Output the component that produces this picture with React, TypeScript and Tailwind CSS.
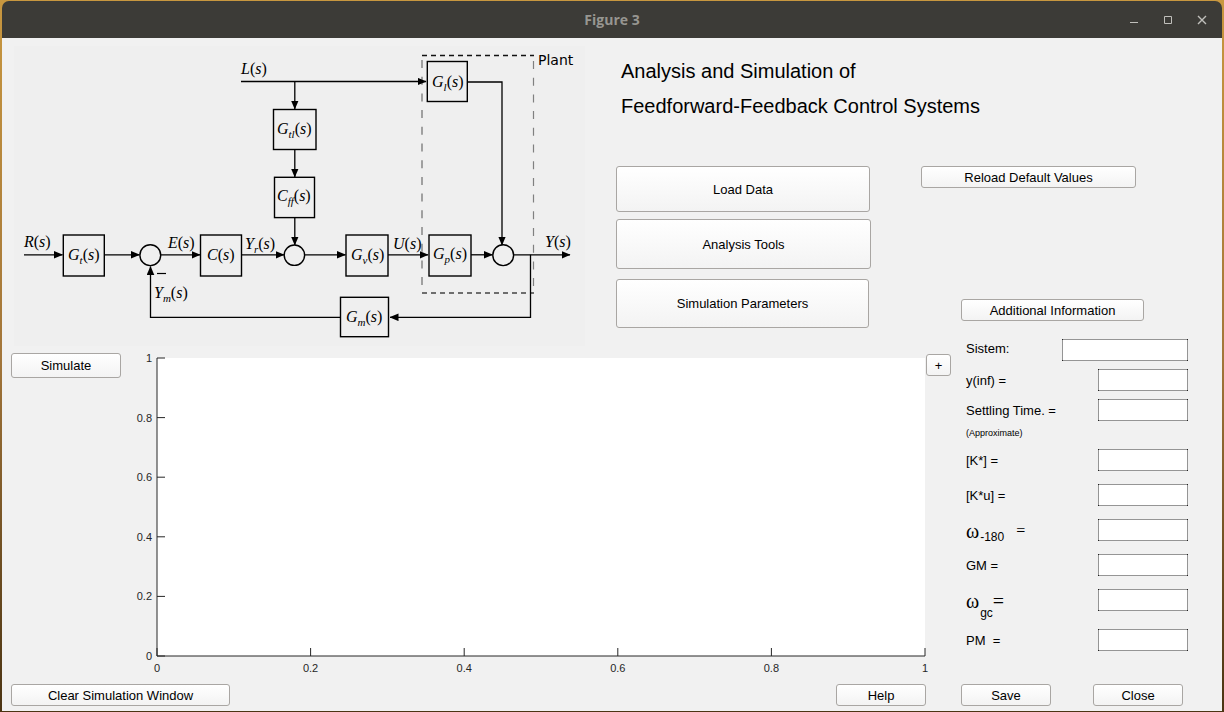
import type { ReactNode } from "react";

const buttonLook =
  "rounded-[3px] border border-[#a9a6a3] bg-linear-to-b from-white to-[#f3f3f3] pt-px text-[13px] leading-4 text-black hover:from-[#fafafa] hover:to-[#ececec]";

function PushButton({ className, children }: { className: string; children: ReactNode }) {
  return (
    <button type="button" className={`${buttonLook} ${className}`}>
      {children}
    </button>
  );
}

const fieldLook =
  "h-[22px] shrink-0 bg-[#959595] bg-[linear-gradient(#222,#222),linear-gradient(#222,#222),linear-gradient(#222,#222),linear-gradient(#222,#222),linear-gradient(#fff,#fff)] bg-no-repeat [background-position:0_0,100%_0,0_100%,100%_100%,center] [background-size:1px_1px,1px_1px,1px_1px,1px_1px,calc(100%_-_2px)_calc(100%_-_2px)] px-1 text-[13px] outline-none";

function Field({
  id,
  label,
  row = "h-[35px]",
  width = "w-[90px]",
}: {
  id: string;
  label: ReactNode;
  row?: string;
  width?: string;
}) {
  return (
    <div className={`flex items-start justify-between ${row}`}>
      <label htmlFor={id} className="whitespace-pre text-[13px] leading-6">
        {label}
      </label>
      <input id={id} type="text" className={`${fieldLook} ${width}`} />
    </div>
  );
}

function Term({ x, y, name, sub }: { x: number; y: number; name: string; sub?: string }) {
  return (
    <text x={x} y={y} fontSize="16">
      <tspan fontStyle="italic">{name}</tspan>
      {sub && (
        <tspan fontStyle="italic" fontSize="11" dy="4">
          {sub}
        </tspan>
      )}
      <tspan dy={sub ? -4 : 0}>(</tspan>
      <tspan fontStyle="italic">s</tspan>
      <tspan>)</tspan>
    </text>
  );
}

function Arrow({ d }: { d: string }) {
  return <path d={d} fill="none" stroke="#000" strokeWidth="1.3" markerEnd="url(#head)" />;
}

function BlockDiagram() {
  return (
    <svg
      viewBox="14 46 571 300"
      className="h-[300px] w-[571px] shrink-0 bg-[#efefef] font-['Liberation_Serif',serif]"
      role="img"
      aria-label="Feedforward-feedback block diagram"
    >
      <defs>
        <marker
          id="head"
          markerWidth="9"
          markerHeight="8"
          refX="8.5"
          refY="4"
          orient="auto"
          markerUnits="userSpaceOnUse"
        >
          <path d="M0 0.2 L9 4 L0 7.8 Z" />
        </marker>
      </defs>

      <path d="M422 55.5H534" stroke="#111" strokeWidth="1.3" strokeDasharray="5 4" />
      <path d="M422 293H534" stroke="#444" strokeWidth="1.5" strokeDasharray="5 4" />
      <path d="M422 60V293" stroke="#a0a0a0" strokeWidth="2" strokeDasharray="8 8.7" />
      <path d="M533.5 61V293" stroke="#808080" strokeWidth="1.2" strokeDasharray="8 8.7" />

      <Arrow d="M241 81.5H426" />
      <Arrow d="M294.8 81.5V109" />
      <Arrow d="M294.8 149V177" />
      <Arrow d="M294.8 218V245" />
      <Arrow d="M467 82H502V245" />
      <Arrow d="M24 254.8H62.5" />
      <Arrow d="M104 254.8H139.5" />
      <Arrow d="M161 254.8H200" />
      <Arrow d="M241 254.8H284" />
      <Arrow d="M305 254.8H345.5" />
      <Arrow d="M388 254.8H428" />
      <Arrow d="M471 254.8H492.5" />
      <Arrow d="M514 254.8H570" />
      <Arrow d="M530.5 254.8V317.3H390" />
      <Arrow d="M340 317.3H150.5V266.5" />

      <g fill="#efefef" stroke="#000" strokeWidth="1.4">
        <rect x="427.3" y="61.5" width="40" height="40" />
        <rect x="273.5" y="109.5" width="42.5" height="40" />
        <rect x="274.5" y="177.3" width="40" height="40.3" />
        <rect x="63.3" y="235" width="41" height="41" />
        <rect x="200.5" y="235" width="41" height="41" />
        <rect x="346" y="235" width="42" height="41" />
        <rect x="429" y="235" width="42" height="41" />
        <rect x="340.5" y="297.3" width="48" height="39.4" />
        <circle cx="150.3" cy="255.2" r="10.4" />
        <circle cx="294.4" cy="255.2" r="10.2" />
        <circle cx="503.2" cy="255.2" r="10.4" />
      </g>
      <path d="M157 273.5H166" stroke="#000" strokeWidth="1.2" />

      <Term x={241} y={74} name="L" />
      <Term x={432} y={87} name="G" sub="l" />
      <Term x={277} y={134} name="G" sub="tl" />
      <Term x={277} y={201} name="C" sub="ff" />
      <Term x={24} y={247} name="R" />
      <Term x={68} y={260} name="G" sub="t" />
      <Term x={168} y={248} name="E" />
      <Term x={207} y={260} name="C" />
      <Term x={245} y={249} name="Y" sub="r" />
      <Term x={351} y={260} name="G" sub="v" />
      <Term x={393} y={249} name="U" />
      <Term x={433} y={259} name="G" sub="p" />
      <Term x={545} y={247} name="Y" />
      <Term x={154} y={298} name="Y" sub="m" />
      <Term x={346} y={322} name="G" sub="m" />
      <text x="538" y="65" fontSize="14" className="font-['DejaVu_Sans',sans-serif]">
        Plant
      </text>
    </svg>
  );
}

const ticks = [0, 0.2, 0.4, 0.6, 0.8, 1];

function ResponsePlot() {
  return (
    <svg
      viewBox="0 0 805 323"
      className="min-w-0 flex-1 overflow-visible"
      fontSize="11"
      fill="#262626"
      role="img"
      aria-label="Simulation plot"
    >
      <rect x="36" y="5" width="768" height="298" fill="#fff" />
      <path d="M36 5V303H804" fill="none" stroke="#262626" />
      {ticks.map((t) => (
        <g key={t}>
          <path
            d={`M36 ${303 - t * 298}h8M${36 + t * 768} 303v-8`}
            fill="none"
            stroke="#262626"
          />
          <text x="31" y={307 - t * 298} textAnchor="end">
            {t}
          </text>
          <text x={36 + t * 768} y="319" textAnchor="middle">
            {t}
          </text>
        </g>
      ))}
    </svg>
  );
}

function TitleBar() {
  return (
    <header className="grid h-[37px] grid-cols-[1fr_auto_1fr] items-center rounded-t-[7px] bg-[#3c3b37] text-[#979691]">
      <h1 className="col-start-2 font-['Open_Sans',sans-serif] text-[14px] font-bold">Figure 3</h1>
      <div className="flex justify-end gap-[18px] pr-3">
        <button type="button" aria-label="Minimize" className="size-4">
          <svg viewBox="0 0 16 16" fill="none" stroke="#c0bfbb">
            <path d="M4 10.5h8" />
          </svg>
        </button>
        <button type="button" aria-label="Maximize" className="size-4">
          <svg viewBox="0 0 16 16" fill="none" stroke="#c0bfbb">
            <path d="M4.5 4.5h7v7h-7z" />
          </svg>
        </button>
        <button type="button" aria-label="Close window" className="size-4">
          <svg viewBox="0 0 16 16" fill="none" stroke="#c0bfbb" strokeWidth="1.4">
            <path d="M4 4l8 8M12 4l-8 8" />
          </svg>
        </button>
      </div>
    </header>
  );
}

export default function App() {
  return (
    <div className="flex min-h-screen flex-col bg-linear-to-b from-[#c8973f] via-[#a3763a] to-[#4b3413] px-[2px] pt-px pb-px font-['Liberation_Sans',sans-serif] text-black">
      <TitleBar />
      <main className="flex flex-1 flex-col bg-[#f1f1f1] pb-[5px]">
        <div className="flex">
          <section className="min-w-0 flex-1">
            <div className="flex pt-2 pl-3">
              <BlockDiagram />
              <div className="flex min-w-0 flex-1 flex-col items-start pt-2 pl-[31px]">
                <h2 className="pl-[5px] text-[20px] leading-[35px] whitespace-nowrap">
                  Analysis and Simulation of
                  <br />
                  Feedforward-Feedback Control Systems
                </h2>
                <PushButton className="mt-[42px] h-[46px] w-[254px]">Load Data</PushButton>
                <PushButton className="mt-[7px] h-[50px] w-[255px]">Analysis Tools</PushButton>
                <PushButton className="mt-[10px] h-[49px] w-[253px]">Simulation Parameters</PushButton>
              </div>
            </div>
            <div className="flex items-start pt-[7px] pr-[10px] pl-[9px]">
              <PushButton className="h-[25px] w-[110px]">Simulate</PushButton>
              <ResponsePlot />
              <PushButton className="mt-px h-[22px] w-[25px]">+</PushButton>
            </div>
          </section>

          <aside className="flex w-[261px] shrink-0 flex-col items-start pt-[128px]">
            <PushButton className="-ml-10 h-[22px] w-[215px]">Reload Default Values</PushButton>
            <PushButton className="mt-[111px] h-[22px] w-[183px]">Additional Information</PushButton>
            <form className="w-full pt-[18px] pr-[34px] pl-[5px]">
              <Field
                id="system"
                row="h-[30px]"
                width="w-[126px]"
                label={<span className="block leading-5">Sistem:</span>}
              />
              <Field id="yinf" row="h-[30px]" label="y(inf) =" />
              <Field
                id="settling"
                row="h-[50px]"
                label={
                  <>
                    Settling Time. =
                    <span className="block text-[9px] leading-5">(Approximate)</span>
                  </>
                }
              />
              <Field id="k" label="[K*] =" />
              <Field id="ku" label="[K*u] =" />
              <Field
                id="w180"
                label={
                  <span className="flex items-start font-['Liberation_Serif',serif]">
                    <span className="text-[20px]">ω</span>
                    <span className="pt-2 pl-px font-['Liberation_Sans',sans-serif] text-[12px] leading-5">
                      -180
                    </span>
                    <span className="pl-3 text-[16px]">=</span>
                  </span>
                }
              />
              <Field id="gm" label="GM =" />
              <Field
                id="wgc"
                row="h-[40px]"
                label={
                  <span className="flex items-start font-['Liberation_Serif',serif]">
                    <span className="text-[20px]">ω</span>
                    <span className="pt-3 pl-px font-['Liberation_Sans',sans-serif] text-[12px]">gc</span>
                    <span className="text-[20px]">=</span>
                  </span>
                }
              />
              <Field id="pm" row="h-[22px]" label="PM  =" />
            </form>
          </aside>
        </div>

        <footer className="mt-auto flex pt-2 pl-[9px]">
          <PushButton className="h-[22px] w-[219px]">Clear Simulation Window</PushButton>
          <PushButton className="mr-[35px] ml-auto h-[22px] w-[90px]">Help</PushButton>
          <div className="flex w-[261px] gap-[42px]">
            <PushButton className="h-[22px] w-[90px]">Save</PushButton>
            <PushButton className="h-[22px] w-[90px]">Close</PushButton>
          </div>
        </footer>
      </main>
    </div>
  );
}
